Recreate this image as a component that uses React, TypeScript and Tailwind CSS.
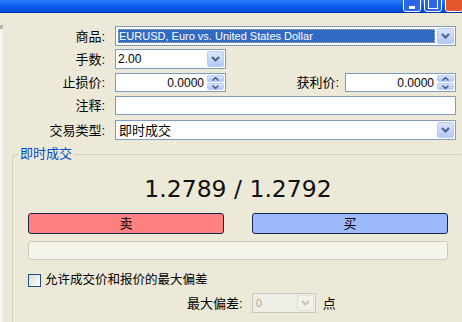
import React from 'react';

function Chevron({ up = false, color = '#4D6185' }: { up?: boolean; color?: string }) {
  return (
    <svg width="9" height="6" viewBox="0 0 9 6" className="block">
      <path
        d={up ? 'M1 5 L4.5 1.5 L8 5' : 'M1 1 L4.5 4.5 L8 1'}
        fill="none"
        stroke={color}
        strokeWidth="2"
      />
    </svg>
  );
}

function DropButton({ disabled = false }: { disabled?: boolean }) {
  return (
    <div
      className={
        disabled
          ? 'w-[17px] h-full flex items-center justify-center rounded-[2px] border border-[#E2E0D6] bg-[#F2F1EA]'
          : 'w-[17px] h-full flex items-center justify-center rounded-[2px] border border-[#BACDF8] bg-gradient-to-b from-[#D9E4FD] to-[#B4C9F6]'
      }
    >
      <Chevron color={disabled ? '#C9C7BA' : '#4D6185'} />
    </div>
  );
}

function Spinner() {
  return (
    <div className="w-[17px] h-full flex flex-col gap-[1px]">
      <div className="flex-1 flex items-center justify-center rounded-[2px] border border-[#BACDF8] bg-gradient-to-b from-[#D9E4FD] to-[#B4C9F6]">
        <svg width="7" height="4" viewBox="0 0 7 4" className="block">
          <path d="M0.5 3.5 L3.5 0.5 L6.5 3.5" fill="none" stroke="#4D6185" strokeWidth="1.5" />
        </svg>
      </div>
      <div className="flex-1 flex items-center justify-center rounded-[2px] border border-[#BACDF8] bg-gradient-to-b from-[#D9E4FD] to-[#B4C9F6]">
        <svg width="7" height="4" viewBox="0 0 7 4" className="block">
          <path d="M0.5 0.5 L3.5 3.5 L6.5 0.5" fill="none" stroke="#4D6185" strokeWidth="1.5" />
        </svg>
      </div>
    </div>
  );
}

function Label({ children, width = 'w-[105px]' }: { children: React.ReactNode; width?: string }) {
  return <div className={`${width} text-right text-[13px] leading-none text-black`}>{children}</div>;
}

export default function App() {
  return (
    <div className="relative w-[462px] h-[322px] overflow-hidden bg-[#ECE9D8] font-['Liberation_Sans','Noto_Sans_CJK_SC',sans-serif] text-black">
      {/* title bar */}
      <div className="h-[13px] flex items-end justify-end gap-[3px] overflow-hidden bg-gradient-to-b from-[#2B7BFC] via-[#0C5DF0] to-[#0049D8] border-b border-[#0033A8]">
        <div className="w-[18px] h-[20px] shrink-0 rounded-[3px] border border-white bg-[#2D65E8] flex items-end justify-center pb-[2px]">
          <div className="w-[6px] h-[3px] bg-white" />
        </div>
        <div className="w-[18px] h-[20px] shrink-0 rounded-[3px] border border-white bg-[#2D65E8] flex items-end justify-center pb-[2px]">
          <div className="w-[10px] h-[12px] border border-white border-t-[3px]" />
        </div>
        <div className="w-[18px] h-[20px] shrink-0 -mr-[1px] rounded-[3px] border border-white bg-[#E2562E]" />
      </div>

      {/* edge of neighbouring frame */}
      <div className="absolute left-0 top-[25px] bottom-0 w-[3px] bg-[#F6F5F0] border-t-[4px] border-[#B8B6AA]" />

      {/* form */}
      <div className="flex flex-col pt-[13px]">
        <div className="flex items-center h-[20px]">
          <Label>商品:</Label>
          <div className="ml-[10px] w-[341px] h-[20px] border border-[#7F9DB9] bg-white flex items-stretch p-[1px] gap-[2px]">
            <div className="flex-1 my-[1px] ml-[1px] bg-[#316AC5] outline outline-1 outline-dotted outline-[#9FB8E2] -outline-offset-1 text-white text-[11px] leading-none flex items-center pl-[1px]">
              EURUSD, Euro vs. United States Dollar
            </div>
            <DropButton />
          </div>
        </div>

        <div className="flex items-center h-[20px] mt-[3px]">
          <Label>手数:</Label>
          <div className="ml-[10px] w-[111px] h-[20px] border border-[#7F9DB9] bg-white flex items-stretch p-[1px]">
            <div className="flex-1 text-[12px] leading-none flex items-center pl-[1px]">2.00</div>
            <DropButton />
          </div>
        </div>

        <div className="flex items-center h-[19px] mt-[4px]">
          <Label>止损价:</Label>
          <div className="ml-[10px] w-[111px] h-[19px] border border-[#7F9DB9] bg-white flex items-stretch p-[1px]">
            <div className="flex-1 text-[12px] leading-none flex items-center justify-end pr-[3px]">0.0000</div>
            <Spinner />
          </div>
          <Label width="w-[113px]">获利价:</Label>
          <div className="ml-[6px] w-[111px] h-[19px] border border-[#7F9DB9] bg-white flex items-stretch p-[1px]">
            <div className="flex-1 text-[12px] leading-none flex items-center justify-end pr-[3px]">0.0000</div>
            <Spinner />
          </div>
        </div>

        <div className="flex items-center h-[19px] mt-[4px]">
          <Label>注释:</Label>
          <div className="ml-[10px] w-[341px] h-[19px] border border-[#7F9DB9] bg-white" />
        </div>

        <div className="flex items-center h-[20px] mt-[5px]">
          <Label>交易类型:</Label>
          <div className="ml-[10px] w-[341px] h-[20px] border border-[#7F9DB9] bg-white flex items-stretch p-[1px]">
            <div className="flex-1 text-[13px] leading-none flex items-center pl-[2px]">即时成交</div>
            <DropButton />
          </div>
        </div>

        {/* group box */}
        <div className="relative mt-[14px] ml-[12px] w-[452px] h-[200px] border border-[#D0D0BF] rounded-[4px] pl-[15px] pr-[15px]">
          <div className="absolute -top-[8px] left-[5px] px-[2px] bg-[#ECE9D8] text-[13px] leading-[14px] text-[#0046D5]">
            即时成交
          </div>

          <div className="pt-[22px] h-[46px] text-center font-['DejaVu_Sans',sans-serif] text-[23.5px] leading-[24px] text-[#111]">
            1.2789 / 1.2792
          </div>

          <div className="mt-[12px] flex gap-[28px]">
            <div className="w-[196px] h-[21px] rounded-[3px] border border-[#14264F] bg-[#FF8080] flex items-center justify-center text-[13px] leading-none">
              卖
            </div>
            <div className="w-[196px] h-[21px] rounded-[3px] border border-[#14264F] bg-[#9DBAFF] flex items-center justify-center text-[13px] leading-none">
              买
            </div>
          </div>

          <div className="mt-[7px] w-[420px] h-[19px] rounded-[3px] border border-[#CDCBBE] bg-[#F5F4EA]" />

          <div className="mt-[14px] flex items-center h-[13px]">
            <div className="w-[13px] h-[13px] border border-[#1C5180] bg-gradient-to-br from-[#DCDCD7] to-white" />
            <div className="ml-[4px] text-[12.5px] leading-none">允许成交价和报价的最大偏差</div>
          </div>

          <div className="mt-[6px] ml-[159px] flex items-center h-[20px]">
            <div className="text-[13px] leading-none">最大偏差:</div>
            <div className="ml-[9px] w-[64px] h-[20px] border border-[#C9C7BA] bg-[#EFEEE6] flex items-stretch p-[1px]">
              <div className="flex-1 text-[11px] leading-none flex items-center pl-[2px] text-[#ACA899]">0</div>
              <DropButton disabled />
            </div>
            <div className="ml-[7px] text-[13px] leading-none">点</div>
          </div>
        </div>
      </div>
    </div>
  );
}
